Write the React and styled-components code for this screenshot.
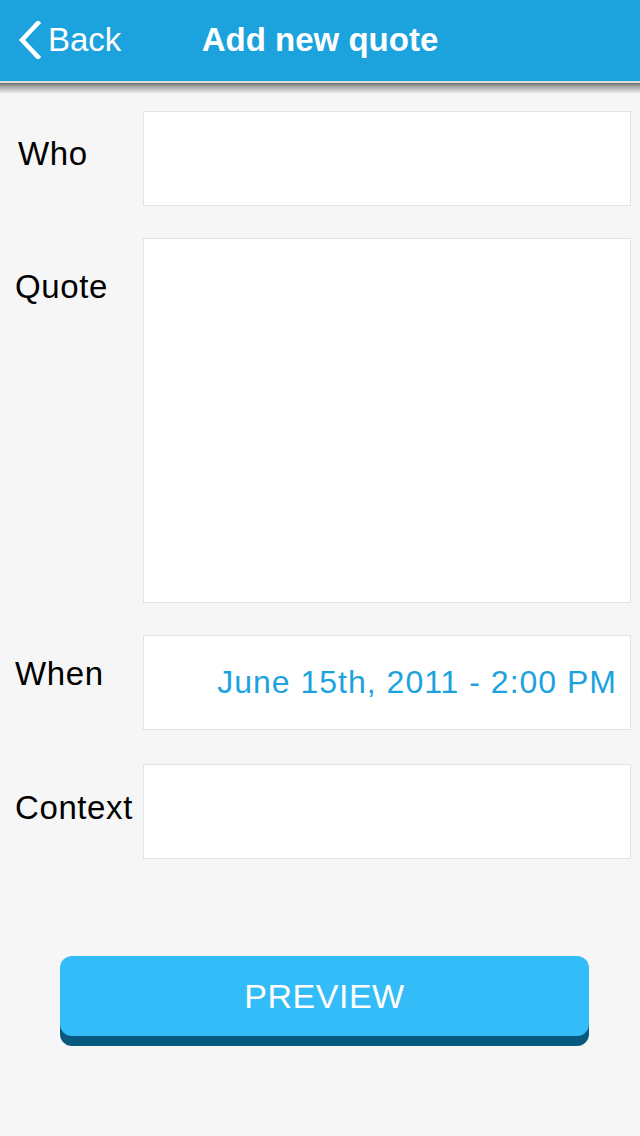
import styled, { createGlobalStyle } from "styled-components";

const GlobalStyle = createGlobalStyle`
  html, body {
    margin: 0;
    padding: 0;
    background: #f6f6f6;
  }
  body {
    font-family: "Helvetica Neue", Helvetica, "Liberation Sans", Arial, sans-serif;
  }
`;

const Screen = styled.div`
  width: 640px;
  min-height: 1136px;
  background: #f6f6f6;
  display: flex;
  flex-direction: column;
`;

const NavBar = styled.header`
  position: relative;
  height: 81px;
  background: #1ca3de;
  border-bottom: 2px solid #dcdcdc;
  display: flex;
  align-items: center;
  justify-content: center;
  color: #fff;
`;

const NavShadow = styled.div`
  height: 11px;
  background: linear-gradient(#6e6e6e, #a9a9a9 35%, #f6f6f6);
`;

const BackButton = styled.button`
  position: absolute;
  left: 18px;
  top: 0;
  bottom: 0;
  display: flex;
  align-items: center;
  gap: 6px;
  border: 0;
  background: none;
  color: #fff;
  font-family: inherit;
  font-size: 33px;
  padding: 0 0 2px;
  cursor: pointer;
`;

const Title = styled.h1`
  margin: 0 0 2px;
  font-size: 33px;
  font-weight: bold;
`;

const Form = styled.div`
  display: grid;
  grid-template-columns: 143px 488px;
  margin-top: 17px;
`;

const Label = styled.label`
  font-size: 33px;
  color: #000;
  padding-left: ${(p) => p.$indent || 15}px;
  padding-top: ${(p) => p.$top}px;
  letter-spacing: 0.6px;
`;

const Field = styled.div`
  height: ${(p) => p.$height}px;
  margin-bottom: ${(p) => p.$gap || 0}px;
  background: #fff;
  border: 1px solid #e3e3e3;
  box-sizing: border-box;
  display: flex;
  align-items: center;
  justify-content: flex-end;
  padding-right: 13px;
`;

const DateValue = styled.span`
  color: #1ca3de;
  font-size: 32px;
  letter-spacing: 1px;
  padding-bottom: 1px;
`;

const ButtonWrap = styled.div`
  display: flex;
  padding: 97px 0 0 60px;
`;

const PreviewButton = styled.button`
  width: 529px;
  height: 80px;
  border: 0;
  border-radius: 12px;
  background: #33bcf8;
  box-shadow: 0 10px 0 #07597d;
  color: #fff;
  font-family: inherit;
  font-size: 34px;
  letter-spacing: 0.5px;
  padding: 0;
  cursor: pointer;
`;

const Chevron = () => (
  <svg width="24" height="38" viewBox="0 0 24 38">
    <path d="M20 2 L4 19 L20 36" fill="none" stroke="#fff" strokeWidth="4.5" strokeLinecap="square" />
  </svg>
);

const App = () => {
  return (
    <Screen>
      <GlobalStyle />
      <NavBar>
        <BackButton>
          <Chevron />
          Back
        </BackButton>
        <Title>Add new quote</Title>
      </NavBar>
      <NavShadow />

      <Form>
        <Label $indent={18} $top={24}>Who</Label>
        <Field $height={95} $gap={32} />

        <Label $top={30}>Quote</Label>
        <Field $height={365} $gap={32} />

        <Label $top={20}>When</Label>
        <Field $height={95} $gap={34}>
          <DateValue>June 15th, 2011 - 2:00 PM</DateValue>
        </Field>

        <Label $top={25}>Context</Label>
        <Field $height={95} />
      </Form>

      <ButtonWrap>
        <PreviewButton>PREVIEW</PreviewButton>
      </ButtonWrap>
    </Screen>
  );
};

export default App;
